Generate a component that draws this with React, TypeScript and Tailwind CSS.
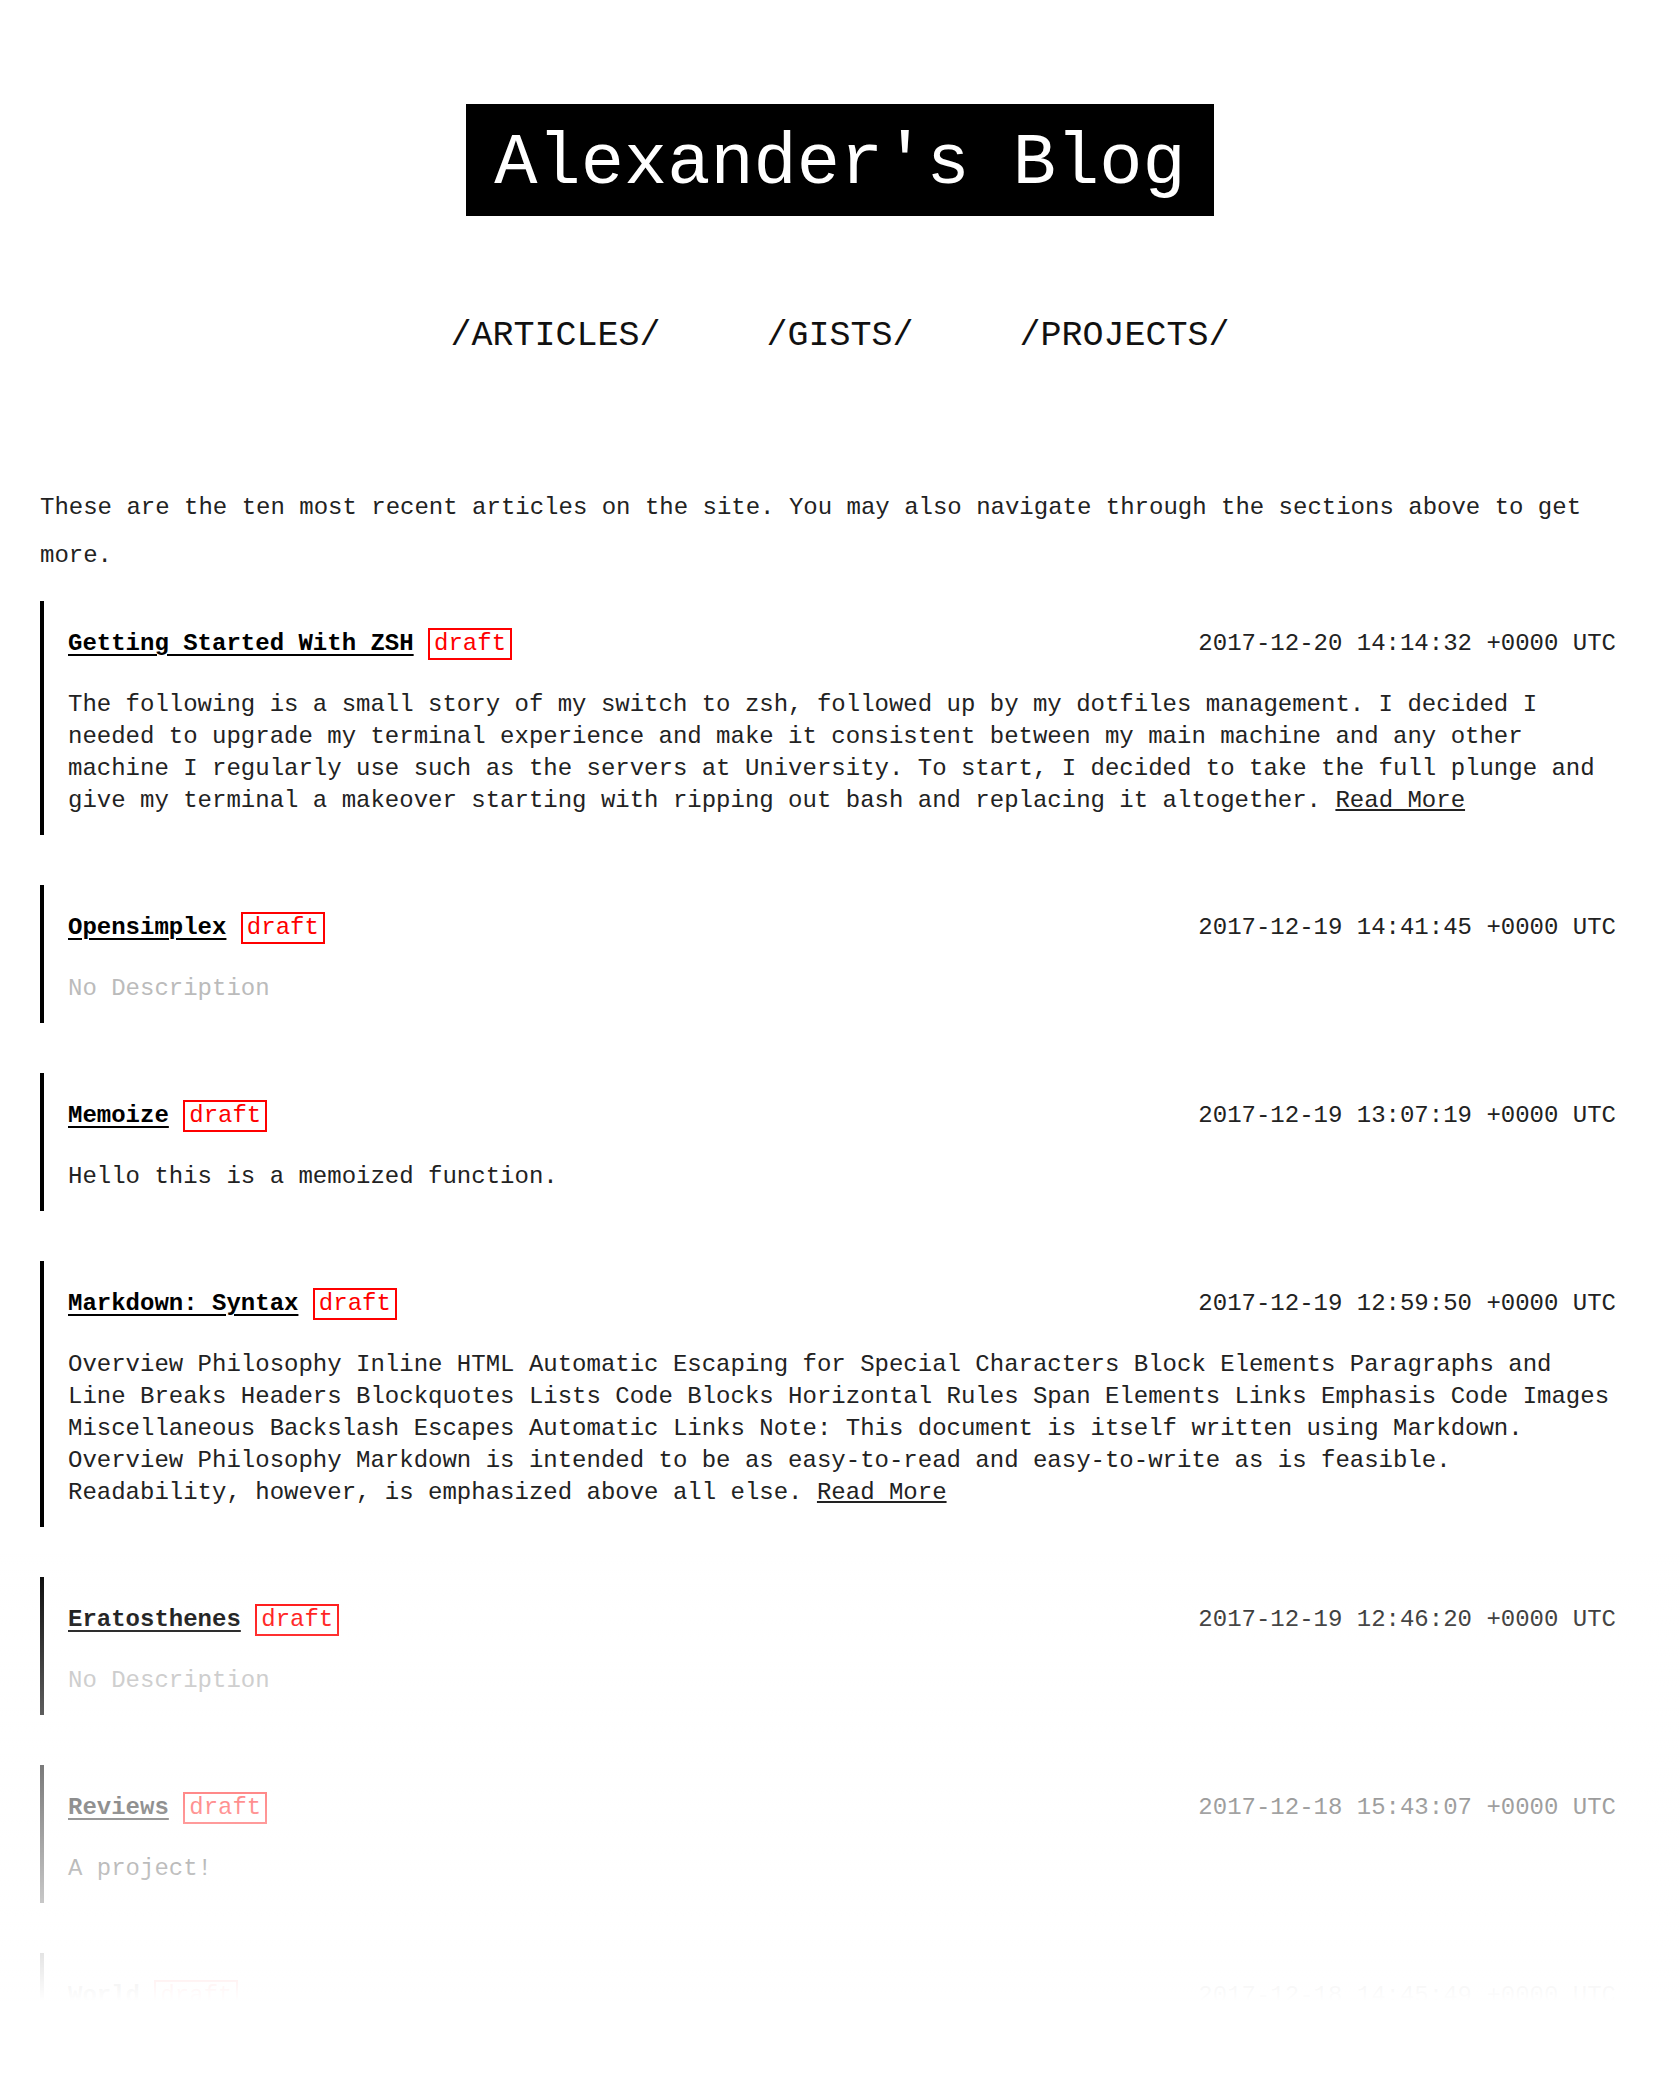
const articles = [
  {
    title: 'Getting Started With ZSH',
    date: '2017-12-20 14:14:32 +0000 UTC',
    body: 'The following is a small story of my switch to zsh, followed up by my dotfiles management. I decided I needed to upgrade my terminal experience and make it consistent between my main machine and any other machine I regularly use such as the servers at University. To start, I decided to take the full plunge and give my terminal a makeover starting with ripping out bash and replacing it altogether.',
    more: true,
  },
  { title: 'Opensimplex', date: '2017-12-19 14:41:45 +0000 UTC', body: null, more: false },
  {
    title: 'Memoize',
    date: '2017-12-19 13:07:19 +0000 UTC',
    body: 'Hello this is a memoized function.',
    more: false,
  },
  {
    title: 'Markdown: Syntax',
    date: '2017-12-19 12:59:50 +0000 UTC',
    body: 'Overview Philosophy Inline HTML Automatic Escaping for Special Characters Block Elements Paragraphs and Line Breaks Headers Blockquotes Lists Code Blocks Horizontal Rules Span Elements Links Emphasis Code Images Miscellaneous Backslash Escapes Automatic Links Note: This document is itself written using Markdown. Overview Philosophy Markdown is intended to be as easy-to-read and easy-to-write as is feasible. Readability, however, is emphasized above all else.',
    more: true,
  },
  { title: 'Eratosthenes', date: '2017-12-19 12:46:20 +0000 UTC', body: null, more: false },
  { title: 'Reviews', date: '2017-12-18 15:43:07 +0000 UTC', body: 'A project!', more: false },
  { title: 'World', date: '2017-12-18 14:45:49 +0000 UTC', body: null, more: false },
];

function ArticleCard({ article, last }: { article: (typeof articles)[number]; last: boolean }) {
  return (
    <article className={`border-l-4 border-black pl-6 pr-6 pt-[27px] pb-[18px] ${last ? '' : 'mb-[50px]'}`}>
      <div className="flex h-8 items-center justify-between">
        <div className="flex items-center whitespace-pre">
          <a href="#" className="font-bold text-black underline decoration-2 underline-offset-4">
            {article.title}
          </a>
          <span> </span>
          <span className="border-2 border-[#ff0000] px-1 leading-[28px] text-[#ff0000]">draft</span>
        </div>
        <span className="text-[#222]">{article.date}</span>
      </div>
      {article.body ? (
        <p className="mt-[29px] leading-8 text-[#222]">
          {article.body}
          {article.more && (
            <>
              {' '}
              <a href="#" className="underline decoration-2 underline-offset-2">
                Read More
              </a>
            </>
          )}
        </p>
      ) : (
        <p className="mt-[29px] leading-8 text-[#bbbbbb]">No Description</p>
      )}
    </article>
  );
}

export default function App() {
  return (
    <div className="min-h-screen bg-white font-['Liberation_Mono','DejaVu_Sans_Mono',monospace] text-[24px] text-[#222]">
      <div className="px-10">
        <header className="flex flex-col items-center pt-[104px]">
          <h1 className="bg-black px-[28px] pt-[24px] pb-[16px] text-[72px] leading-[72px] text-white">
            Alexander's Blog
          </h1>
          <nav className="mt-[96px] flex gap-[106px] text-[35px] leading-[48px] text-[#111]">
            <a href="#">/ARTICLES/</a>
            <a href="#">/GISTS/</a>
            <a href="#">/PROJECTS/</a>
          </nav>
        </header>

        <p className="mt-[124px] leading-[48px] text-[#222]">
          These are the ten most recent articles on the site. You may also navigate through the sections above to get more.
        </p>

        <main className="mt-[21px]">
          {articles.map((a, i) => (
            <ArticleCard key={a.title} article={a} last={i === articles.length - 1} />
          ))}
        </main>
      </div>

      {/* fade the list out toward the bottom of the window */}
      <div className="pointer-events-none fixed inset-x-0 bottom-0 h-[550px] bg-linear-to-b from-white/0 to-white to-[82%]" />
    </div>
  );
}
